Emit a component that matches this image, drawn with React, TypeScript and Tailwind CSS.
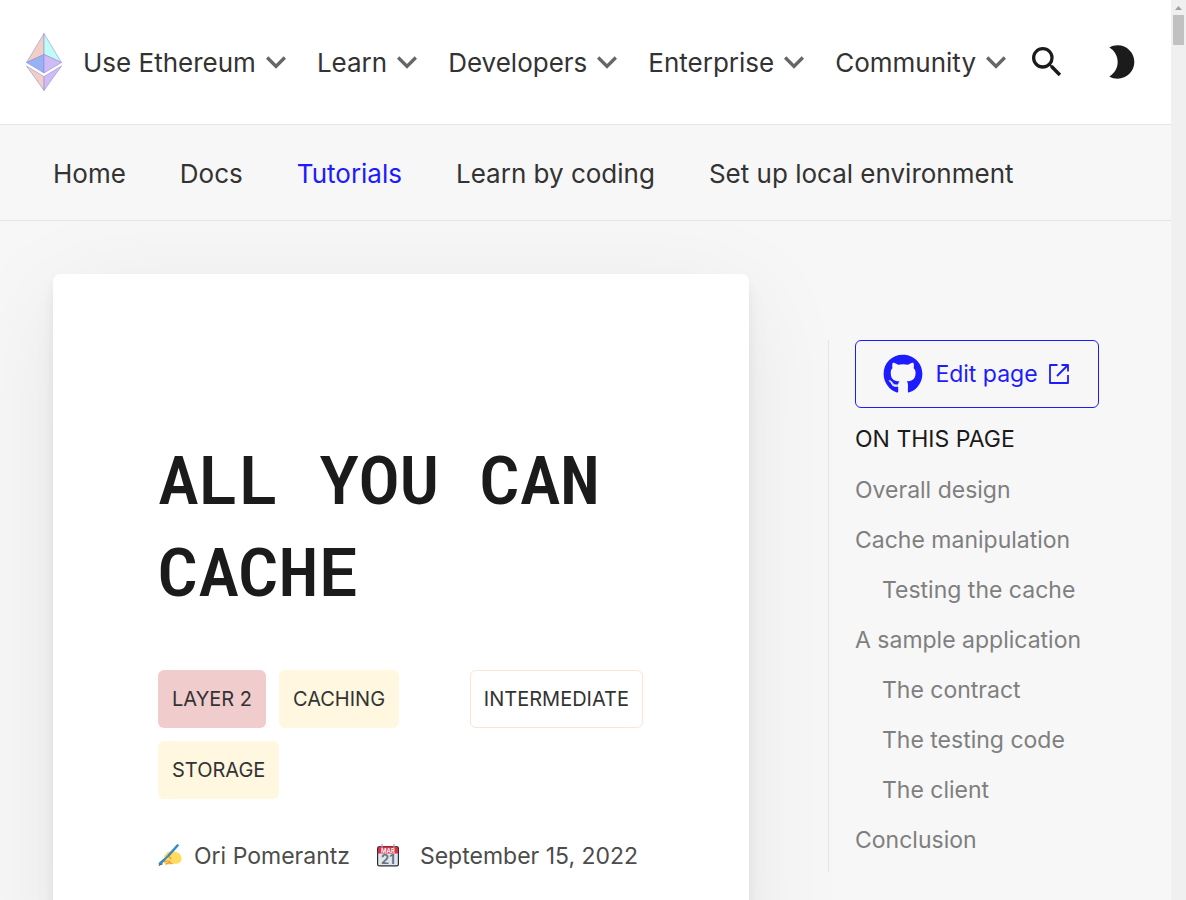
import { FaGithub } from "react-icons/fa";
import { MdBrightness2, MdExpandMore, MdSearch } from "react-icons/md";

const menus = ["Use Ethereum", "Learn", "Developers", "Enterprise", "Community"];
const sections = ["Home", "Docs", "Tutorials", "Learn by coding", "Set up local environment"];
const contents = [
  { label: "Overall design", nested: false },
  { label: "Cache manipulation", nested: false },
  { label: "Testing the cache", nested: true },
  { label: "A sample application", nested: false },
  { label: "The contract", nested: true },
  { label: "The testing code", nested: true },
  { label: "The client", nested: true },
  { label: "Conclusion", nested: false },
];

function EthLogo() {
  return (
    <svg viewBox="0 0 36 58" className="h-[58px] w-9" aria-hidden="true" stroke="#8f86dc" strokeOpacity="0.6" strokeWidth="0.9" strokeLinejoin="round">
      <path d="M18 0.5V21.5L0.5 29.5Z" fill="#f0d0c5" />
      <path d="M18 0.5V21.5L35.5 29.5Z" fill="#c0fbf6" />
      <path d="M18 21.5V40L0.5 29.5Z" fill="#97b1f2" />
      <path d="M18 21.5V40L35.5 29.5Z" fill="#cfbcf5" />
      <path d="M18 43.5V57.5L0.5 33Z" fill="#f0d0c5" />
      <path d="M18 43.5V57.5L35.5 33Z" fill="#cfbcf5" />
    </svg>
  );
}

function ExternalLink() {
  return (
    <svg viewBox="0 0 22 20" className="ml-[11px] h-5 w-[22px]" fill="none" stroke="currentColor" strokeWidth="1.8" strokeLinejoin="round" aria-hidden="true">
      <path d="M8.5 1H1V19H19V11M12.5 1H19V7.5M19 1L8 12" />
    </svg>
  );
}

function WritingHand() {
  return (
    <svg viewBox="0 0 24 24" className="size-6" role="img" aria-label="Author">
      <path d="M6.500 11.500C8 8.500 11 7 14 7.200C19 7 23.500 10 23.500 14.500C23.500 18.500 20.500 20 17 19.800C13 20.400 9.500 20.600 7.500 20.200C6 20 5.500 18.600 6.500 17.600C4.800 17 5 15 6.500 14.600C5.600 13.800 5.800 12.400 6.500 11.500Z" fill="#ffdc5d" />
      <path d="M10 13C12 12.500 13 13.500 12.500 15M7 17.600C9 16.800 11 17 12 17.800M8 20.100C10 18.800 12.500 18.600 14 19.700" fill="none" stroke="#ef9645" strokeWidth="1.2" strokeLinecap="round" />
      <path d="M0.500 22L2 18.200L5 20Z" fill="#292f33" />
      <path d="M2 19.500L6 16M11 11L19.500 1.500" stroke="#3b88c3" strokeWidth="2.600" strokeLinecap="round" />
      <path d="M6 16L11.500 10.500" stroke="#3b88c3" strokeWidth="1.800" />
    </svg>
  );
}

function Calendar() {
  return (
    <svg viewBox="0 0 24 24" className="size-6" role="img" aria-label="Date">
      <rect x="1" y="2" width="22" height="20.500" rx="2.500" fill="#292f33" />
      <rect x="2.200" y="8" width="19.600" height="13.200" rx="1" fill="#e1e8ed" />
      <path d="M2 9.500V4.500Q2 2.500 4 2.500H20Q22 2.500 22 4.500V9.500Z" fill="#dd2e44" />
      <path d="M6 0.500V3.500M18 0.500V3.500" stroke="#99aab5" strokeWidth="1.200" strokeLinecap="round" />
      <text x="12" y="9" textAnchor="middle" fill="#f5f8fa" fontFamily="Inter, sans-serif" fontWeight="700" fontSize="6">MAR</text>
      <text x="12" y="20" textAnchor="middle" fill="#66757f" fontFamily="Inter, sans-serif" fontWeight="700" fontSize="13">21</text>
    </svg>
  );
}

export default function App() {
  return (
    <div className="flex h-screen overflow-hidden bg-[#f7f7f7] font-['Inter',sans-serif] text-[#333333]">
      <div className="flex min-w-0 flex-1 flex-col">
        <header className="relative z-10 flex h-[125px] shrink-0 items-center border-b border-[#e5e5e5] bg-white pl-[26px] pr-[30px]">
          <a href="#home" aria-label="Ethereum home" className="mr-[21px] shrink-0"><EthLogo /></a>
          <nav className="flex gap-[21px]" aria-label="Main">
            {menus.map((m) => (
              <button key={m} type="button" className="flex items-center whitespace-nowrap text-[26px] leading-10">
                <span className="pt-0.5">{m}</span>
                <MdExpandMore className="size-10 text-[#666666]" />
              </button>
            ))}
          </nav>
          <div className="ml-auto flex gap-[34px] text-[#1b1b1b]">
            <button type="button" aria-label="Search"><MdSearch className="size-10" /></button>
            <button type="button" aria-label="Switch theme"><MdBrightness2 className="size-10" /></button>
          </div>
        </header>
        <nav aria-label="Developers" className="relative z-10 flex h-24 shrink-0 items-center gap-[54px] border-b border-[#e5e5e5] bg-[#f7f7f7] px-[53px] pt-0.5 text-[26px]">
          {sections.map((s) => (
            <a key={s} href="#section" className={s === "Tutorials" ? "whitespace-nowrap text-[#1c1cff]" : "whitespace-nowrap"}>{s}</a>
          ))}
        </nav>
        <main className="flex min-h-0 flex-1 items-start pl-[53px] pr-[72px] pt-[53px]">
          <article className="min-w-0 flex-1 rounded-[7px] bg-white pb-24 pl-[105px] pr-[106px] pt-[158px] shadow-[0px_23px_110px_rgba(0,0,0,0.07),0px_17px_28px_rgba(0,0,0,0.03),0px_7px_12px_rgba(0,0,0,0.05)]">
            <h1 className="font-['Roboto_Mono','Liberation_Mono',monospace] text-[67px] font-semibold uppercase leading-[92px] text-[#1b1b1b]">All you can cache</h1>
            <div className="mt-[54px] flex items-start justify-between text-[20px] leading-[30px]">
              <div className="flex flex-1 flex-wrap gap-[13px]">
                <span className="rounded-md bg-[#f0cccc] px-[14px] py-[14px]">LAYER 2</span>
                <span className="rounded-md bg-[#fff7df] px-[14px] py-[14px]">CACHING</span>
                <span className="rounded-md bg-[#fff7df] px-[14px] py-[14px]">STORAGE</span>
              </div>
              <span className="rounded-md border border-[#ffe3d3] px-[13px] py-[13px]">INTERMEDIATE</span>
            </div>
            <div className="mt-[39px] flex flex-wrap items-center whitespace-nowrap text-[23px] leading-9 text-[#4c4c4c]">
              <span className="mr-[26px] flex items-center gap-3"><WritingHand />Ori Pomerantz</span>
              <span className="flex items-center gap-5"><Calendar /><time dateTime="2022-09-15">September 15, 2022</time></span>
            </div>
          </article>
          <aside className="ml-[79px] mt-[66px] w-[271px] shrink-0 border-l border-[#e5e5e5] pl-[26px] text-[23px] leading-[30px]">
            <a href="#edit" className="flex h-[68px] items-center justify-center rounded-md border border-[#1c1cff] text-[#1c1cff]">
              <FaGithub className="mr-3 size-10" />Edit page<ExternalLink />
            </a>
            <h2 className="mt-4 text-[#1b1b1b]">ON THIS PAGE</h2>
            <ul className="mt-[21px] flex flex-col gap-5 pb-[17px] text-[#7f7f7f]">
              {contents.map((c) => (
                <li key={c.label} className={c.nested ? "pl-[27px]" : ""}><a href="#content">{c.label}</a></li>
              ))}
            </ul>
          </aside>
        </main>
      </div>
      <div aria-hidden="true" className="flex w-[15px] shrink-0 flex-col items-center bg-[#f0f0f0] pt-[6px]">
        <svg viewBox="0 0 7 4" className="h-1 w-[7px]"><path d="M0 4L3.5 0L7 4Z" fill="#a0a0a0" /></svg>
        <div className="mt-[5px] h-[30px] w-[11px] bg-[#c1c1c1]" />
      </div>
    </div>
  );
}
